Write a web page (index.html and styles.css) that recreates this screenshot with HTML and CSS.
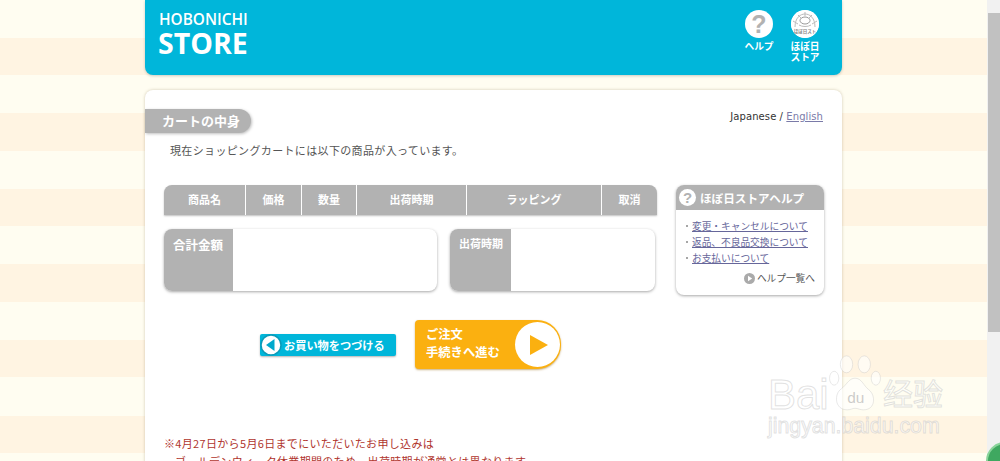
FILE: index.html
```html
<!DOCTYPE html>
<html>
<head>
    <meta charset="utf-8">
    <title>カートの中身</title>
    <link rel="stylesheet" href="styles.css">
</head>
<body>
    <div class="page">
        <div class="wrapper">
            <header class="header">
                <div class="logo">
                    <div class="logo-small">HOBONICHI</div>
                    <div class="logo-big">STORE</div>
                </div>
                <nav class="header-nav">
                    <a class="nav-item">
                        <span class="nav-icon nav-q">?</span>
                        <span>ヘルプ</span>
                    </a>
                    <a class="nav-item">
                        <span class="nav-icon">
                            <svg width="28" height="28" viewBox="0 0 28 28">
                                <circle cx="14" cy="14" r="14" fill="#fff"/>
                                <path d="M4 17C4 8 9 4 14 4s10 4 10 13" fill="none" stroke="#bbb" stroke-width="1"/>
                                <ellipse cx="14" cy="10.5" rx="5" ry="3.5" fill="none" stroke="#999" stroke-width="1"/>
                                <path d="M8 15c3 2 9 2 12 0M2 11l5 3M26 11l-5 3M7 5l3 3M21 5l-3 3M14 2v4" stroke="#bbb" stroke-width="1" fill="none"/>
                                <text x="14" y="23" class="badge-text">ほぼ日スト</text>
                            </svg>
                        </span>
                        <span>ほぼ日<br>ストア</span>
                    </a>
                </nav>
            </header>

            <main class="card">
                <div class="lang">Japanese / <a href="#">English</a></div>
                <h1 class="title">カートの中身</h1>
                <p class="lead">現在ショッピングカートには以下の商品が入っています。</p>

                <div class="columns">
                    <div class="cart">
                        <div class="cart-head">
                            <div class="col-name">商品名</div>
                            <div class="col-price">価格</div>
                            <div class="col-qty">数量</div>
                            <div class="col-ship">出荷時期</div>
                            <div class="col-wrap">ラッピング</div>
                            <div class="col-cancel">取消</div>
                        </div>
                        <div class="summary">
                            <div class="sum-box sum-total">
                                <div class="sum-label">合計金額</div>
                            </div>
                            <div class="sum-box sum-ship">
                                <div class="sum-label sum-label-small">出荷時期</div>
                            </div>
                        </div>
                    </div>

                    <aside class="help">
                        <div class="help-head"><span class="help-q">?</span>ほぼ日ストアヘルプ</div>
                        <ul class="help-list">
                            <li><a href="#">変更・キャンセルについて</a></li>
                            <li><a href="#">返品、不良品交換について</a></li>
                            <li><a href="#">お支払いについて</a></li>
                        </ul>
                        <div class="help-more">
                            <svg width="11" height="11" viewBox="0 0 11 11">
                                <circle cx="5.5" cy="5.5" r="5.5" fill="#aaa"/>
                                <path d="M4 2.8L8.2 5.5 4 8.2z" fill="#fff"/>
                            </svg>
                            ヘルプ一覧へ
                        </div>
                    </aside>
                </div>

                <div class="buttons">
                    <a class="btn-back">
                        <svg width="22" height="22" viewBox="0 0 22 22">
                            <circle cx="11" cy="11" r="10" fill="#fff" stroke="#0b9ab8" stroke-width="1.5"/>
                            <path d="M14.5 5v12L6 11z" fill="#00a9cc"/>
                        </svg>
                        お買い物をつづける
                    </a>
                    <a class="btn-next">
                        <span class="btn-next-text">ご注文<br>手続きへ進む</span>
                        <span class="btn-next-circle">
                            <svg width="20" height="22" viewBox="0 0 20 22">
                                <path d="M1 1l18 10L1 21z" fill="#fbb010"/>
                            </svg>
                        </span>
                    </a>
                </div>

                <p class="notice">※4月27日から5月6日までにいただいたお申し込みは<br><span class="notice-indent">ゴールデンウィーク休業期間のため、出荷時期が通常とは異なります</span></p>
            </main>
        </div>

        <div class="watermark">
            <div class="wm-top">
                <span class="wm-bai">Bai</span>
                <svg class="wm-paw" width="54" height="58" viewBox="0 0 70 75">
                    <ellipse cx="8" cy="30" rx="6" ry="9" />
                    <ellipse cx="24" cy="12" rx="8" ry="11" />
                    <ellipse cx="47" cy="12" rx="8" ry="11" />
                    <ellipse cx="62" cy="30" rx="6" ry="9" />
                    <path d="M35 30c-8 0-11 9-18 14-9 6-9 27 8 27 5 0 6-2 10-2s6 2 11 2c16 0 16-19 7-26-7-5-9-15-18-15z" />
                    <text x="36" y="62" class="wm-du">du</text>
                </svg>
                <span class="wm-cn">经验</span>
            </div>
            <div class="wm-url">jingyan.baidu.com</div>
        </div>

        <div class="scrollbar">
            <div class="scroll-arrow"></div>
            <div class="scroll-thumb"></div>
        </div>
        <div class="corner-badge"></div>
    </div>
</body>
</html>
```

FILE: styles.css
```css
* {
    box-sizing: border-box;
}

html, body {
    margin: 0;
    padding: 0;
    height: 461px;
    overflow: hidden;
}

body {
    font-family: "Noto Sans CJK JP", "Noto Sans", sans-serif;
    color: #444;
}

a {
    color: inherit;
}

.page {
    position: relative;
    height: 461px;
    overflow: hidden;
    padding-right: 13px;
    background: repeating-linear-gradient(to bottom, #fffdf1 0, #fffdf1 38px, #fff4e2 38px, #fff4e2 75.5px);
}

.wrapper {
    width: 697px;
    margin: 0 auto;
}

/* header */
.header {
    display: flex;
    justify-content: space-between;
    height: 75px;
    padding: 10px 23px 0 13px;
    background-color: #00b6da;
    border-radius: 0 0 8px 8px;
    box-shadow: 0 1px 3px rgba(0, 0, 0, 0.2);
    color: #fff;
}

.logo {
    font-family: "Open Sans", sans-serif;
    font-weight: 700;
}

.logo-small {
    padding-left: 1px;
    font-size: 15.4px;
    line-height: 19px;
    font-weight: 600;
}

.logo-big {
    font-size: 28.5px;
    line-height: 28px;
}

.header-nav {
    display: flex;
    gap: 18px;
}

.nav-item {
    display: flex;
    flex-direction: column;
    align-items: center;
    width: 28px;
    font-size: 9.7px;
    font-weight: 700;
    line-height: 11px;
    text-align: center;
    white-space: nowrap;
}

.nav-icon {
    display: block;
    width: 28px;
    height: 28px;
    margin-bottom: 3px;
    border-radius: 50%;
    background-color: #fff;
    overflow: hidden;
}

.nav-q {
    color: #b2b2b2;
    font-family: "Liberation Sans", sans-serif;
    font-size: 25px;
    font-weight: 700;
    line-height: 28px;
}

.badge-text {
    fill: #888;
    font-size: 4.5px;
    font-weight: 700;
    text-anchor: middle;
}

/* card */
.card {
    position: relative;
    height: 400px;
    margin-top: 15px;
    padding-top: 19px;
    background-color: #fff;
    border-radius: 8px;
    box-shadow: 0 0 3px rgba(120, 100, 60, 0.35);
}

.lang {
    position: absolute;
    top: 20px;
    right: 19px;
    font-family: "DejaVu Sans", sans-serif;
    font-size: 10px;
    line-height: 14px;
    color: #333;
    letter-spacing: 0.08px;
}

.lang a {
    color: #7a7aa8;
}

.title {
    display: inline-block;
    margin: 0;
    height: 24px;
    padding-left: 17px;
    width: 106px;
    background-color: #b2b2b2;
    border-radius: 0 12px 12px 0;
    box-shadow: 1px 1px 3px rgba(0, 0, 0, 0.25);
    color: #fff;
    font-size: 13px;
    font-weight: 700;
    line-height: 23px;
    vertical-align: top;
}

.lead {
    margin: 9px 0 0 25px;
    font-size: 11px;
    line-height: 16px;
    letter-spacing: 0.35px;
    color: #555;
}

.columns {
    display: flex;
    margin-top: 27px;
    padding-left: 19px;
}

.cart {
    width: 493px;
}

.cart-head {
    display: flex;
    height: 30px;
    background-color: #b2b2b2;
    border-radius: 8px 8px 0 0;
    box-shadow: 0 1px 2px rgba(0, 0, 0, 0.25);
    color: #fff;
    font-size: 11px;
    font-weight: 700;
    line-height: 28px;
    text-align: center;
}

.cart-head div {
    border-right: 1px solid #fff;
}

.cart-head div:last-child {
    border-right: none;
}

.col-name {
    width: 82px;
}

.col-price {
    width: 56px;
}

.col-qty {
    width: 55px;
}

.col-ship {
    width: 110px;
}

.col-wrap {
    width: 135px;
}

.col-cancel {
    flex: 1;
}

.summary {
    display: flex;
    justify-content: space-between;
    margin-top: 14px;
    padding-right: 2px;
}

.sum-box {
    display: flex;
    height: 62px;
    background-color: #fff;
    border-radius: 8px;
    box-shadow: 0 1px 3px rgba(0, 0, 0, 0.35);
    overflow: hidden;
}

.sum-total {
    width: 273px;
}

.sum-ship {
    width: 205px;
}

.sum-label {
    width: 69px;
    padding: 7px 0 0 9px;
    background-color: #b2b2b2;
    color: #fff;
    font-size: 12.5px;
    font-weight: 700;
    line-height: 18px;
}

.sum-label-small {
    width: 61px;
    padding-top: 5px;
    font-size: 11px;
}

/* help box */
.help {
    width: 148px;
    height: 110px;
    margin-left: 19px;
    background-color: #fff;
    border-radius: 8px;
    box-shadow: 0 1px 3px rgba(0, 0, 0, 0.35);
    overflow: hidden;
}

.help-head {
    display: flex;
    align-items: center;
    height: 25px;
    padding-left: 3px;
    background-color: #b2b2b2;
    color: #fff;
    font-size: 11.6px;
    font-weight: 700;
}

.help-q {
    width: 17px;
    height: 17px;
    margin-right: 4px;
    border-radius: 50%;
    background-color: #fff;
    color: #b2b2b2;
    font-family: "Liberation Sans", sans-serif;
    font-size: 15px;
    line-height: 17px;
    text-align: center;
}

.help-list {
    margin: 8px 0 0;
    padding: 0 0 0 10px;
    list-style: none;
    font-size: 9.7px;
}

.help-list li {
    display: flex;
    height: 16px;
    line-height: 16px;
}

.help-list li::before {
    content: "";
    width: 2px;
    height: 2px;
    margin: 7px 4px 0 0;
    background-color: #888;
    border-radius: 50%;
}

.help-list a {
    color: #66669a;
}

.help-more {
    display: flex;
    align-items: center;
    justify-content: flex-end;
    gap: 2px;
    margin-top: 5px;
    padding-right: 9px;
    font-size: 9.7px;
    line-height: 14px;
    color: #555;
}

/* buttons */
.buttons {
    display: flex;
    align-items: center;
    margin-top: 25px;
    padding-left: 115px;
}

.btn-back {
    display: flex;
    align-items: center;
    gap: 2px;
    width: 136px;
    height: 22px;
    margin-right: 19px;
    background-color: #00b6da;
    border-radius: 2px;
    box-shadow: 0 1px 2px rgba(0, 0, 0, 0.3);
    color: #fff;
    font-size: 11.2px;
    font-weight: 700;
    white-space: nowrap;
}

.btn-next {
    display: flex;
    align-items: center;
    justify-content: space-between;
    width: 146px;
    height: 49px;
    padding-left: 11px;
    background-color: #fbb010;
    border-radius: 4px 24px 24px 4px;
    box-shadow: 0 1px 2px rgba(150, 100, 0, 0.5);
    color: #fff;
    font-size: 12.3px;
    font-weight: 700;
    line-height: 18px;
}

.btn-next-text {
    padding-bottom: 3px;
}

.btn-next-circle {
    display: flex;
    align-items: center;
    justify-content: center;
    width: 45px;
    height: 45px;
    margin-right: 1px;
    padding-left: 3px;
    border-radius: 50%;
    background-color: #fff;
}

.notice {
    margin: 65px 0 0 19px;
    color: #b0352d;
    font-size: 11px;
    line-height: 18px;
    letter-spacing: 0.33px;
}

.notice-indent {
    padding-left: 11px;
}

/* baidu watermark */
.watermark {
    position: absolute;
    left: 768px;
    top: 355px;
    width: 210px;
    font-family: "Liberation Sans", sans-serif;
    color: rgba(255, 255, 255, 0.65);
    -webkit-text-stroke: 1px rgba(190, 190, 190, 0.45);
}

.wm-top {
    display: flex;
    align-items: flex-end;
    font-size: 42px;
    line-height: 48px;
}

.wm-bai {
    width: 60px;
    margin-bottom: -6px;
}

.wm-paw {
    flex: none;
    fill: rgba(255, 255, 255, 0.6);
    stroke: rgba(190, 190, 190, 0.45);
    stroke-width: 1;
}

.wm-du {
    fill: rgba(170, 170, 170, 0.6);
    stroke: none;
    font-size: 20px;
    text-anchor: middle;
    -webkit-text-stroke: 0;
}

.wm-cn {
    margin-left: 1px;
    font-family: "Noto Sans CJK SC", sans-serif;
    font-size: 30px;
    line-height: 42px;
}

.wm-url {
    margin-top: 1px;
    font-size: 21.3px;
    line-height: 24px;
}

/* browser bits */
.scrollbar {
    position: absolute;
    top: 0;
    right: 0;
    width: 13px;
    height: 461px;
    background-color: #f1f1f1;
}

.scroll-arrow {
    height: 13px;
}

.scroll-thumb {
    height: 319px;
    margin-left: 1px;
    background-color: #c1c1c1;
}

.corner-badge {
    position: absolute;
    left: 986px;
    top: 442px;
    width: 38px;
    height: 38px;
    border-radius: 50%;
    background-color: #3fa860;
    border: 2px solid #8ad49b;
}
```
